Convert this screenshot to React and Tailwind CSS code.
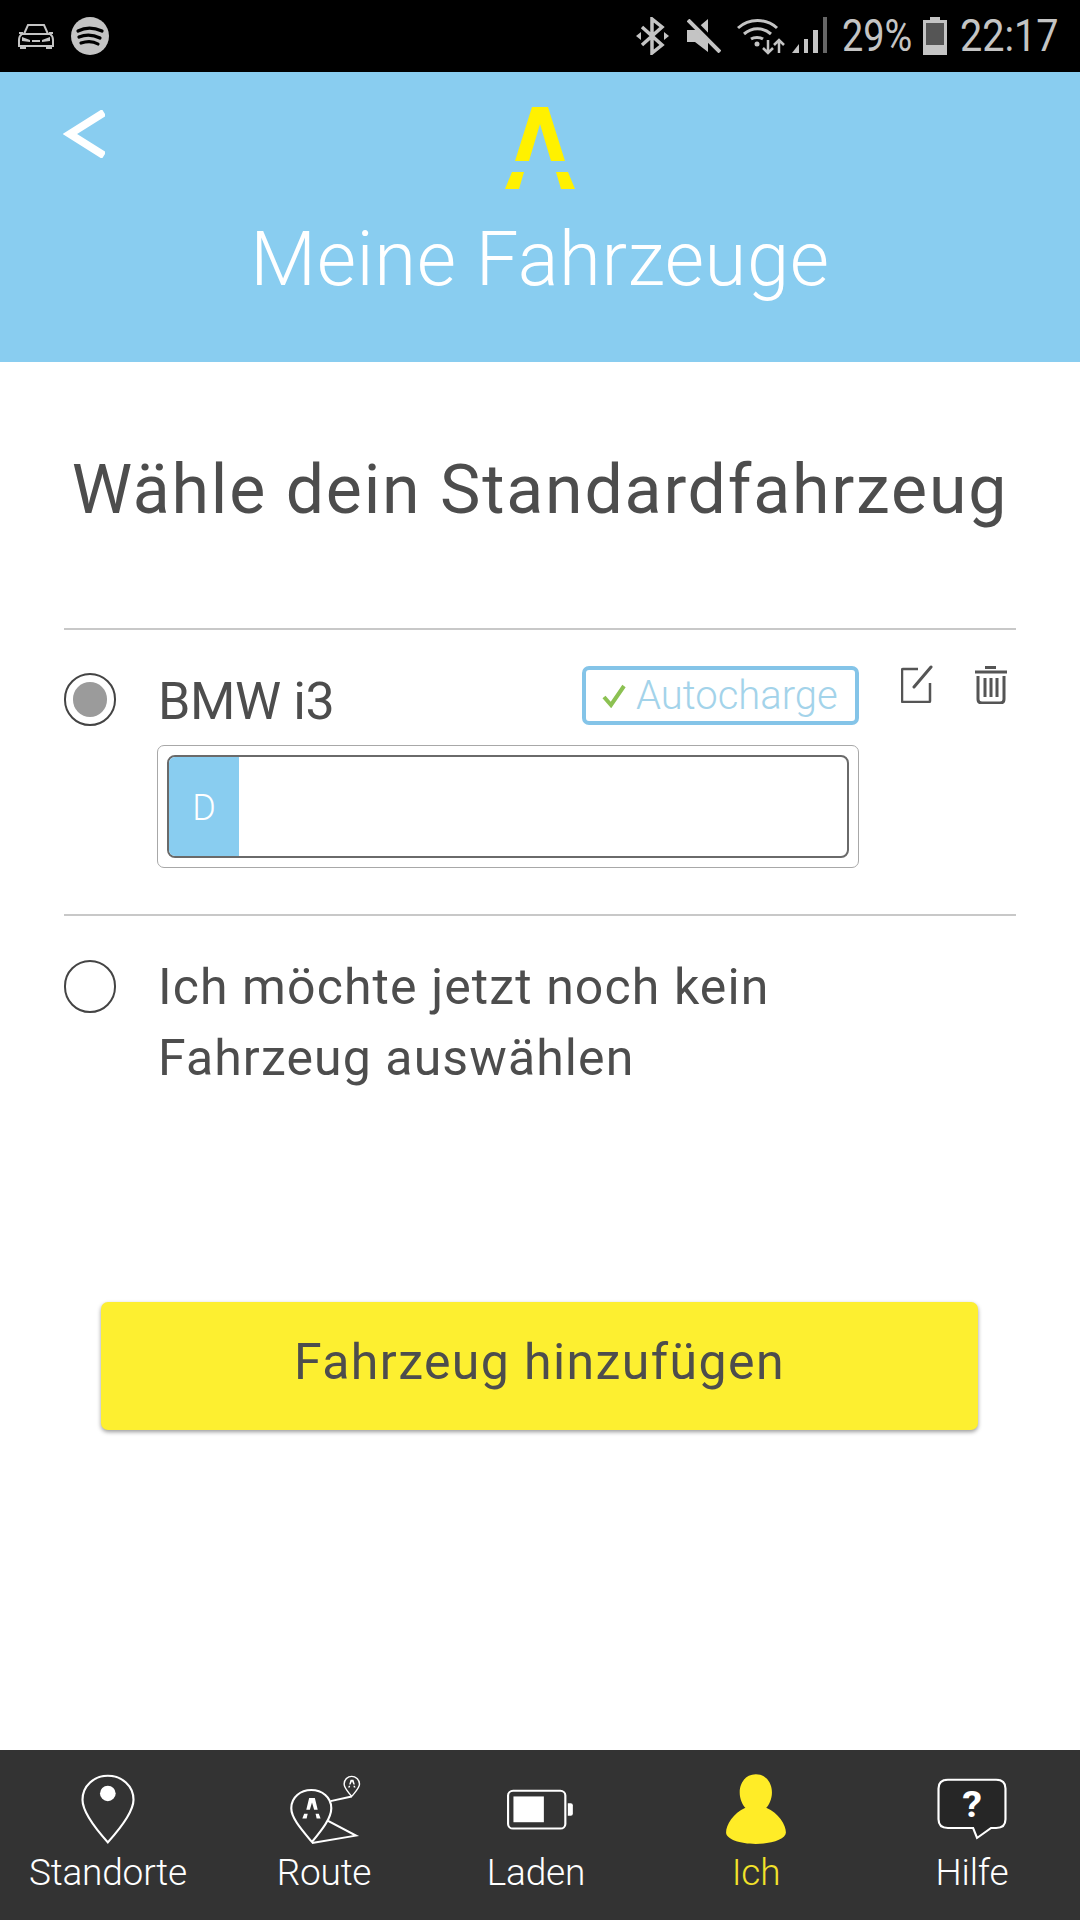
const Logo = ({ className, fill }) => (
  <svg viewBox="0 0 70 82" className={className}>
    <path fill={fill} d="M27 0H43L60 54H46L35 17 24 54H10Z" />
    <path fill={fill} d="M7 65H19L14 82H0ZM51 65H63L70 82H56Z" />
  </svg>
);

const Radio = ({ checked }) => (
  <div className="flex h-[53px] w-[52px] shrink-0 items-center justify-center rounded-full border-2 border-[#444444] bg-white">
    {checked && <div className="h-[35px] w-[34px] rounded-full bg-[#9b9b9b]" />}
  </div>
);

const Tab = ({ label, active, children, shift }) => (
  <div className={`flex flex-col items-center ${shift || ""}`}>
    <div className="flex h-[72px] items-start justify-center">{children}</div>
    <div className={`mt-[5px] text-[37px] leading-[46px] font-light tracking-[-0.2px] ${active ? "text-[#f2e22a]" : "text-white"}`}>{label}</div>
  </div>
);

export default function App() {
  return (
    <div className="flex h-[1920px] w-[1080px] flex-col overflow-hidden bg-white font-['Roboto',sans-serif] text-[#4d4d4d]">
      {/* status bar */}
      <div className="flex h-[72px] shrink-0 items-center justify-between bg-black pr-[22px] pl-[18px] text-[#c4c4c4]">
        <div className="flex items-center gap-[17px]">
          <svg viewBox="0 0 36 25" className="h-[25px] w-[36px]" fill="none" stroke="#c4c4c4" strokeWidth="2">
            <path d="M6 10 10 1H26L30 10" />
            <path d="M1 9H5M31 9H35" />
            <path d="M4 10H32Q35 12 35 16V22H1V16Q1 12 4 10Z" />
            <path d="M2 22H8V25H2ZM28 22H34V25H28Z" fill="#c4c4c4" stroke="none" />
            <path d="M4 13 12 16 12 18 4 17ZM32 13 24 16 24 18 32 17ZM14 16H22V18H14Z" fill="#c4c4c4" stroke="none" />
          </svg>
          <svg viewBox="0 0 38 38" className="h-[38px] w-[38px]">
            <circle cx="19" cy="19" r="19" fill="#c4c4c4" />
            <path d="M7 14C15 10 24 11 31 14M8 20C15 17 23 18 29 21M10 26C16 24 22 24 27 27" fill="none" stroke="#000" strokeWidth="3.2" strokeLinecap="round" />
          </svg>
        </div>
        <div className="flex items-center">
          <svg viewBox="0 0 35 38" className="h-[38px] w-[35px]" fill="none" stroke="#c4c4c4" strokeWidth="3.5">
            <path d="M7 10 27 28 17 36V2L27 10 7 28" />
            <path d="M1 19 6 15V23ZM34 19 29 15V23Z" fill="#c4c4c4" stroke="none" />
          </svg>
          <svg viewBox="0 0 34 34" className="ml-[17px] h-[34px] w-[34px]">
            <path fill="#c4c4c4" d="M0 11H8L21 0V33L8 23H0Z" />
            <path d="M4 -1 35 31" stroke="#000" strokeWidth="4" />
            <path d="M1 1 33 33" stroke="#c4c4c4" strokeWidth="4" />
          </svg>
          <svg viewBox="0 0 90 38" className="ml-[16px] h-[38px] w-[90px]" fill="none" stroke="#c4c4c4">
            <path d="M1 11C12 1 29 1 40 11M7 17C15 10 26 10 34 17M14 22C17 20 23 20 26 22" strokeWidth="3" />
            <circle cx="20" cy="27" r="2.5" fill="#c4c4c4" stroke="none" />
            <path d="M31 23V36M26 31 31 36 36 31M42 36V23M37 28 42 23 47 28" strokeWidth="2.5" />
            <path d="M55 36 62 27V36Z" fill="#c4c4c4" stroke="none" />
            <path d="M67 36V22H71V36ZM76 36V13H81V36Z" fill="#c4c4c4" stroke="none" />
            <path d="M86 36V0H90V36Z" fill="#666" stroke="none" />
          </svg>
          <div className="ml-[15px] w-[72px] origin-left scale-x-[.86] text-[44px] leading-none font-normal whitespace-nowrap">29%</div>
          <svg viewBox="0 0 24 38" className="ml-[9px] h-[38px] w-[24px]">
            <path fill="#c4c4c4" d="M7 0H17V3H24V38H0V3H7Z" />
            <rect x="3" y="6" width="18" height="22" fill="#555" />
          </svg>
          <div className="ml-[13px] w-[98px] origin-left scale-x-[.9] text-[44px] leading-none font-normal whitespace-nowrap">22:17</div>
        </div>
      </div>

      {/* header */}
      <div className="relative flex h-[290px] shrink-0 flex-col items-center bg-[#89cdf0] pt-[35px]">
        <svg viewBox="0 0 43 48" className="absolute top-[38px] left-[63px] h-[48px] w-[42px]" fill="none" stroke="#fff" strokeWidth="8">
          <path d="M42 2 7 24 42 46" />
        </svg>
        <Logo className="h-[82px] w-[70px]" fill="#fff100" />
        <h1 className="mt-[28px] text-[76px] leading-[84px] font-light tracking-[0.6px] text-white">Meine Fahrzeuge</h1>
      </div>

      {/* body */}
      <div className="flex flex-1 flex-col">
        <h2 className="mt-[90px] text-center text-[68px] leading-[76px] font-normal tracking-[1.8px]">Wähle dein Standardfahrzeug</h2>

        <div className="mx-[64px] mt-[100px] h-[2px] bg-[#c8c8c8]" />

        <div className="relative mx-[64px] flex h-[284px] gap-[41px] pt-[43px]">
          <Radio checked />
          <div className="flex w-[702px] flex-col">
            <div className="flex h-[72px] items-start justify-between">
              <div className="-mt-[1px] pl-[1px] text-[52px] leading-[60px] font-normal tracking-[-0.4px]">BMW i3</div>
              <div className="-mt-[7px] flex h-[59px] w-[277px] items-center rounded-[7px] border-4 border-[#84c4e8] pl-[16px]">
                <svg viewBox="0 0 24 24" className="h-[24px] w-[24px]" fill="none" stroke="#8cc152" strokeWidth="4">
                  <path d="M2 13 9 21 22 2" />
                </svg>
                <span className="ml-[10px] text-[40px] leading-none font-light text-[#a3d3ea]">Autocharge</span>
              </div>
            </div>
            <div className="h-[123px] rounded-[7px] border border-[#a8a8a8] p-[9px]">
              <div className="flex h-full overflow-hidden rounded-[8px] border-2 border-[#6a6a6a]">
                <div className="flex w-[70px] items-center justify-center bg-[#89cdf0] pt-[2px] text-[36px] font-light text-white">D</div>
              </div>
            </div>
          </div>
          <svg viewBox="0 0 32 38" className="absolute top-[35px] left-[837px] h-[38px] w-[32px]" fill="none" stroke="#555" strokeWidth="2.5">
            <path d="M17 4H2Q1 4 1 5V36Q1 37 2 37H28Q29 37 29 36V18" />
            <path d="M13 22 30 2" strokeWidth="3" strokeLinecap="round" />
          </svg>
          <svg viewBox="0 0 32 38" className="absolute top-[36px] left-[911px] h-[38px] w-[32px]" fill="none" stroke="#555" strokeWidth="3">
            <path d="M10 1.5H21M0 6H32" />
            <path d="M3 10V33Q3 37 7 37H25Q29 37 29 33V10" />
            <path d="M10 12V31M16 12V31M22 12V31" />
          </svg>
        </div>

        <div className="mx-[64px] h-[2px] bg-[#c8c8c8]" />

        <div className="mx-[64px] flex gap-[41px] pt-[44px]">
          <Radio />
          <div className="-mt-[8px] pl-[1px] text-[50px] leading-[71px] font-normal tracking-[1.1px]">Ich möchte jetzt noch kein<br />Fahrzeug auswählen</div>
        </div>

        <div className="mt-[208px] ml-[101px] flex h-[128px] w-[877px] items-center justify-center rounded-[7px] bg-[#fdef30] pb-[8px] text-[50px] font-normal tracking-[1.4px] shadow-[0_2px_4px_rgba(0,0,0,0.4)]">
          Fahrzeug hinzufügen
        </div>
      </div>

      {/* tab bar */}
      <div className="grid h-[170px] shrink-0 grid-cols-5 bg-[#333333] pt-[23px]">
        <Tab label="Standorte">
          <svg viewBox="225 100 157 215" preserveAspectRatio="none" className="h-[72px] w-[56px]" fill="none" stroke="#fff" strokeWidth="6">
            <path d="M303 307C270 268 232 215 232 180C232 138 265 108 303 108C342 108 375 138 375 180C375 215 336 268 303 307Z" />
            <ellipse cx="303" cy="161" rx="22" ry="23" fill="#fff" stroke="none" />
          </svg>
        </Tab>
        <Tab label="Route">
          <svg viewBox="800 100 210 215" preserveAspectRatio="none" className="h-[72px] w-[75px]" fill="none" stroke="#fff" strokeWidth="6">
            <path d="M870 306C842 270 812 235 812 205C812 172 838 151 868 151C898 151 924 172 924 205C924 235 898 270 870 306Z" />
            <path d="M922 184 981 170M915 243 993 287 870 309" />
            <path d="M981 170C970 155 960 145 960 133C960 120 970 110 981 110C992 110 1003 120 1003 133C1003 145 992 155 981 170Z" strokeWidth="4" />
            <path d="M862 175H878L886 210H876L870 188 864 210H854ZM848 222H858L855 236H843ZM880 222H889L894 236H883Z" fill="#fff" stroke="none" />
            <path d="M978 120H986L990 134H986L982 125 978 134H974ZM973 138H977L976 143H971ZM986 138H990L992 143H987Z" fill="#fff" stroke="none" />
          </svg>
        </Tab>
        <Tab label="Laden" shift="-translate-x-[4px]">
          <svg viewBox="0 100 190 215" preserveAspectRatio="none" className="h-[72px] w-[68px] translate-x-[5px]" fill="none" stroke="#fff" strokeWidth="6">
            <rect x="3" y="153" width="160" height="113" rx="14" />
            <rect x="18" y="170" width="85" height="77" fill="#fff" stroke="none" />
            <path d="M170 190H178Q184 190 184 196V222Q184 228 178 228H170Z" fill="#fff" stroke="none" />
          </svg>
        </Tab>
        <Tab label="Ich" active>
          <svg viewBox="575 100 173 215" preserveAspectRatio="none" className="h-[72px] w-[62px]">
            <path fill="#ffec27" d="M661 104C690 104 706 130 706 158C706 178 698 195 690 204C725 220 745 255 745 278C745 298 705 312 661 312C617 312 578 298 578 278C578 255 598 220 632 204C624 195 616 178 616 158C616 130 632 104 661 104Z" />
          </svg>
        </Tab>
        <Tab label="Hilfe">
          <svg viewBox="1165 100 200 215" preserveAspectRatio="none" className="h-[72px] w-[72px]">
            <path fill="#262626" stroke="#fff" strokeWidth="6" d="M1198 120H1332Q1358 120 1358 146V238Q1358 264 1332 264H1318L1279 294 1268 264H1198Q1172 264 1172 238V146Q1172 120 1198 120Z" />
            <text x="1265" y="232" textAnchor="middle" fill="#fff" fontSize="110" fontWeight="700" fontFamily="Roboto, sans-serif">?</text>
          </svg>
        </Tab>
      </div>
    </div>
  );
}
